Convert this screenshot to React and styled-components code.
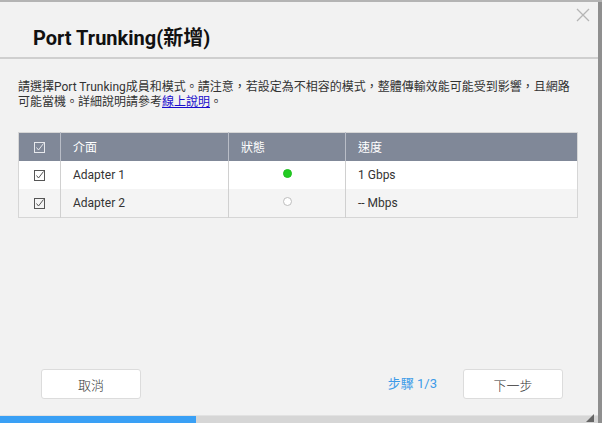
import React from 'react';
import styled, { createGlobalStyle } from 'styled-components';

const GlobalStyle = createGlobalStyle`
  html, body {
    margin: 0;
    padding: 0;
    width: 602px;
    height: 423px;
    overflow: hidden;
    background: #9a9a9a;
    font-family: Roboto, "Noto Sans CJK TC", sans-serif;
  }
`;

const Page = styled.div`
  width: 602px;
  height: 423px;
  display: flex;
  flex-direction: column;
  background: #a8a8a8;
`;

const TopStrip = styled.div`
  height: 2px;
  flex: none;
  background: #b4b4b4;
`;

const Frame = styled.div`
  flex: 1;
  display: flex;
  min-height: 0;
`;

const Dialog = styled.div`
  position: relative;
  width: 598px;
  display: flex;
  flex-direction: column;
  background: #f2f2f2;
`;

const SideStrip = styled.div`
  flex: 1;
  background: #8f8f8f;
`;

const Header = styled.div`
  height: 57px;
  flex: none;
  display: flex;
  align-items: center;
  padding: 14px 0 0 33px;
  border-bottom: 2px solid #cfcfcf;
  box-sizing: border-box;
`;

const Title = styled.h1`
  margin: 0;
  font-size: 20px;
  font-weight: 700;
  color: #111;
`;

const Close = styled.button`
  position: absolute;
  top: 4px;
  right: 6px;
  width: 18px;
  height: 18px;
  padding: 0;
  border: none;
  background: none;
  cursor: pointer;
`;

const Body = styled.div`
  flex: 1;
  padding: 21px 20px 0 18px;
`;

const Desc = styled.p`
  margin: 0;
  font-size: 12px;
  line-height: 15px;
  color: #333;
`;

const HelpLink = styled.a`
  color: #1a0dcc;
  text-decoration: underline;
`;

const Table = styled.table`
  margin-top: 22px;
  width: 560px;
  border-collapse: collapse;
  border: 1px solid #d6d6d6;
  font-size: 12px;
`;

const HeadRow = styled.tr`
  background: #808898;
  color: #fff;
`;

const Th = styled.th`
  height: 28px;
  padding: 0 0 0 ${(p) => (p.$center ? 0 : 12)}px;
  text-align: ${(p) => (p.$center ? 'center' : 'left')};
  font-weight: 400;
  width: ${(p) => p.$w}px;
  border-left: 1px solid #b9bdc7;
  box-sizing: border-box;
  &:first-child {
    border-left: none;
  }
`;

const Row = styled.tr`
  background: ${(p) => (p.$alt ? '#f4f4f4' : '#ffffff')};
  color: #333;
`;

const Td = styled.td`
  height: 28px;
  padding: 0 0 0 ${(p) => (p.$center ? 0 : 12)}px;
  text-align: ${(p) => (p.$center ? 'center' : 'left')};
  border-left: 1px solid #d0d0d0;
  &:first-child {
    border-left: none;
  }
`;

const Dot = styled.span`
  display: inline-block;
  width: 9px;
  height: 9px;
  border-radius: 50%;
  vertical-align: middle;
  box-sizing: border-box;
  background: ${(p) => (p.$on ? '#22cc22' : '#ffffff')};
  border: 1px solid ${(p) => (p.$on ? '#1fbf1f' : '#bdbdbd')};
  margin-top: -3px;
`;

const Footer = styled.div`
  flex: none;
  height: 46px;
  display: flex;
  align-items: flex-start;
  padding: 0 35px 0 41px;
`;

const Button = styled.button`
  width: 100px;
  height: 30px;
  background: #fff;
  border: 1px solid #dcdcdc;
  border-radius: 3px;
  font-family: Roboto, "Noto Sans CJK TC", sans-serif;
  font-size: 13px;
  font-weight: 300;
  color: #333;
  cursor: pointer;
`;

const Spacer = styled.div`
  flex: 1;
`;

const Step = styled.span`
  font-size: 13px;
  line-height: 30px;
  color: #3c9be8;
  margin-right: 26px;
`;

const Progress = styled.div`
  flex: none;
  height: 7px;
  border-top: 1px solid #e2e2e2;
  background: #d6d6d6;
  position: relative;
`;

const ProgressFill = styled.div`
  height: 100%;
  background: #3aa0f5;
`;

const Grip = styled.svg`
  position: absolute;
  right: 4px;
  bottom: 1px;
`;

const CheckBox = ({ light }) => (
  <svg width="11" height="11" viewBox="0 0 11 11" style={{ verticalAlign: 'middle' }}>
    <rect x="0.5" y="0.5" width="10" height="10" fill="none" stroke={light ? '#e6e8ec' : '#555'} />
    <path d="M2.5 5.5 L4.5 8 L9.5 1.5" fill="none" stroke={light ? '#e6e8ec' : '#555'} strokeWidth="1" />
  </svg>
);

const adapters = [
  { name: 'Adapter 1', on: true, speed: '1 Gbps' },
  { name: 'Adapter 2', on: false, speed: '-- Mbps' },
];

const step = 1;
const steps = 3;

export default function App() {
  return (
    <>
      <GlobalStyle />
      <Page>
        <TopStrip />
        <Frame>
          <Dialog>
            <Close aria-label="close">
              <svg width="18" height="18" viewBox="0 0 18 18">
                <path d="M3 3 L15 15 M15 3 L3 15" stroke="#b5b5b5" strokeWidth="1.3" />
              </svg>
            </Close>
            <Header>
              <Title>Port Trunking(新增)</Title>
            </Header>
            <Body>
              <Desc>
                請選擇Port Trunking成員和模式。請注意，若設定為不相容的模式，整體傳輸效能可能受到影響，且網路可能當機。詳細說明請參考
                <HelpLink href="#help">線上說明</HelpLink>。
              </Desc>
              <Table>
                <thead>
                  <HeadRow>
                    <Th $center $w={42}>
                      <CheckBox light />
                    </Th>
                    <Th $w={168}>介面</Th>
                    <Th $w={117}>狀態</Th>
                    <Th>速度</Th>
                  </HeadRow>
                </thead>
                <tbody>
                  {adapters.map((a, i) => (
                    <Row key={a.name} $alt={i % 2 === 1}>
                      <Td $center>
                        <CheckBox />
                      </Td>
                      <Td>{a.name}</Td>
                      <Td $center>
                        <Dot $on={a.on} />
                      </Td>
                      <Td>{a.speed}</Td>
                    </Row>
                  ))}
                </tbody>
              </Table>
            </Body>
            <Footer>
              <Button>取消</Button>
              <Spacer />
              <Step>步驟 {step}/{steps}</Step>
              <Button>下一步</Button>
            </Footer>
            <Progress>
              <ProgressFill style={{ width: `${(step / steps) * 98.4}%` }} />
              <Grip width="8" height="8" viewBox="0 0 8 8">
                <path d="M8 0 L8 8 L0 8 Z" fill="#666" />
              </Grip>
            </Progress>
          </Dialog>
          <SideStrip />
        </Frame>
      </Page>
    </>
  );
}
